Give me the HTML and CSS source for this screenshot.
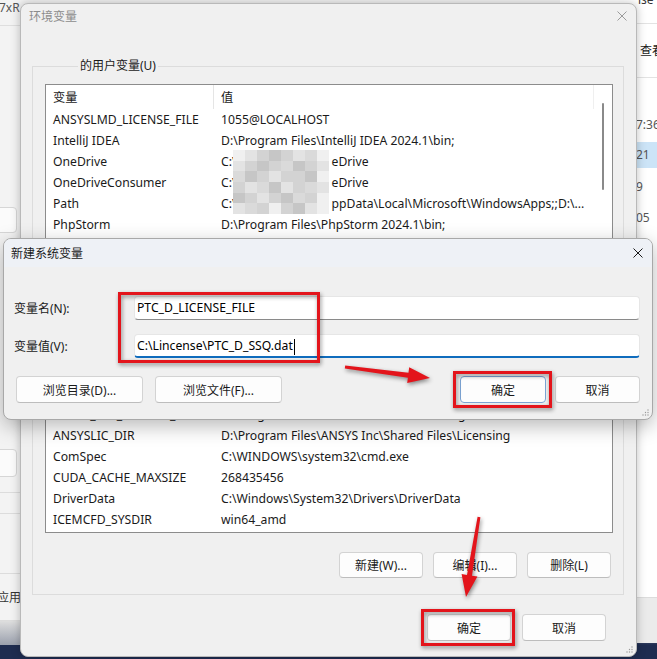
FILE: index.html
```html
<!DOCTYPE html>
<html lang="zh-CN">
<head>
<meta charset="utf-8">
<title>环境变量</title>
<link rel="stylesheet" href="styles.css">
</head>
<body>
<div class="desk">
  <div class="bgwin bg-left">
    <div class="bl-head"><span>7xR</span></div>
    <div class="bl-box bl-box1"></div>
    <div class="bl-box bl-box2"></div>
    <div class="bl-line bl-l1"></div>
    <div class="bl-line bl-l2"></div>
    <div class="bl-line bl-l3"></div>
    <div class="bl-apply">应用(A)</div>
    <div class="bl-line bl-l4"></div>
    <div class="bl-foot"></div>
  </div>

  <div class="bgwin bg-right">
    <div class="br-top"><span>ise</span></div>
    <div class="br-tool">查看</div>
    <div class="br-gap"></div>
    <div class="br-row">7:36</div>
    <div class="br-row sel">21</div>
    <div class="br-row">9</div>
    <div class="br-row">05</div>
    <div class="br-fill"></div>
    <div class="br-status"></div>
  </div>

  <section class="win env">
    <header class="tb">
      <span class="title">环境变量</span>
      <svg class="close" width="10" height="10" viewBox="0 0 10 10"><path d="M0.5 0.5L9.5 9.5M9.5 0.5L0.5 9.5"/></svg>
    </header>

    <fieldset class="group group-user">
      <legend>的用户变量(U)</legend>
      <div class="list">
        <div class="list-main">
          <div class="lh"><div class="c1">变量</div><div class="c2">值</div></div>
          <div class="lr"><div class="c1">ANSYSLMD_LICENSE_FILE</div><div class="c2">1055@LOCALHOST</div></div>
          <div class="lr"><div class="c1">IntelliJ IDEA</div><div class="c2">D:\Program Files\IntelliJ IDEA 2024.1\bin;</div></div>
          <div class="lr"><div class="c1">OneDrive</div><div class="c2">C:\<span class="redact"></span>eDrive</div></div>
          <div class="lr"><div class="c1">OneDriveConsumer</div><div class="c2">C:\<span class="redact"></span>eDrive</div></div>
          <div class="lr"><div class="c1">Path</div><div class="c2">C:\<span class="redact"></span>ppData\Local\Microsoft\WindowsApps;;D:\...</div></div>
          <div class="lr"><div class="c1">PhpStorm</div><div class="c2">D:\Program Files\PhpStorm 2024.1\bin;</div></div>
          <div class="lr"><div class="c1">TEMP</div><div class="c2">%USERPROFILE%\AppData\Local\Temp</div></div>
        </div>
        <div class="vscroll"><div class="thumb"></div></div>
        <div class="mosaic">
          <i class="d"></i><i class="b"></i><i class="a"></i><i class="c"></i><i class="a"></i><i class="b"></i><i class="e"></i><i class="d"></i>
          <i class="b"></i><i class="a"></i><i class="c"></i><i class="a"></i><i class="e"></i><i class="c"></i><i class="a"></i><i class="b"></i>
          <i class="e"></i><i class="c"></i><i class="a"></i><i class="b"></i><i class="a"></i><i class="a"></i><i class="c"></i><i class="d"></i>
          <i class="a"></i><i class="b"></i><i class="e"></i><i class="c"></i><i class="b"></i><i class="a"></i><i class="e"></i><i class="b"></i>
          <i class="c"></i><i class="a"></i><i class="b"></i><i class="a"></i><i class="c"></i><i class="e"></i><i class="a"></i><i class="d"></i>
          <i class="b"></i><i class="e"></i><i class="a"></i><i class="d"></i><i class="a"></i><i class="c"></i><i class="b"></i><i class="d"></i>
        </div>
      </div>
      <div class="btnrow">
        <div class="btn">新建(N)...</div>
        <div class="btn">编辑(E)...</div>
        <div class="btn">删除(D)</div>
      </div>
    </fieldset>

    <fieldset class="group group-sys">
      <legend>系统变量(S)</legend>
      <div class="list list-sys">
        <div class="list-main">
          <div class="lh"><div class="c1">变量</div><div class="c2">值</div></div>
          <div class="lr"><div class="c1">ANSYS_SYSDIR</div><div class="c2">winx64</div></div>
          <div class="lr"><div class="c1">ANSYS241_DIR</div><div class="c2">D:\Program Files\ANSYS Inc\v241\ANSYS</div></div>
          <div class="lr"><div class="c1">ANSYS_INC_LICENSE_DIR</div><div class="c2">D:\Program Files\ANSYS Inc\v241\licensing</div></div>
          <div class="lr"><div class="c1">ANSYSLIC_DIR</div><div class="c2">D:\Program Files\ANSYS Inc\Shared Files\Licensing</div></div>
          <div class="lr"><div class="c1">ComSpec</div><div class="c2">C:\WINDOWS\system32\cmd.exe</div></div>
          <div class="lr"><div class="c1">CUDA_CACHE_MAXSIZE</div><div class="c2">268435456</div></div>
          <div class="lr"><div class="c1">DriverData</div><div class="c2">C:\Windows\System32\Drivers\DriverData</div></div>
          <div class="lr"><div class="c1">ICEMCFD_SYSDIR</div><div class="c2">win64_amd</div></div>
        </div>
        <div class="vscroll"></div>
      </div>
      <div class="btnrow">
        <div class="btn">新建(W)...</div>
        <div class="btn">编辑(I)...</div>
        <div class="btn">删除(L)</div>
      </div>
    </fieldset>

    <div class="actions">
      <div class="btn">确定</div>
      <div class="btn">取消</div>
    </div>
    <svg class="grip" width="7" height="7" viewBox="0 0 7 7"><circle cx="6" cy="1" r="0.7"/><circle cx="3.5" cy="3.5" r="0.7"/><circle cx="6" cy="3.5" r="0.7"/><circle cx="1" cy="6" r="0.7"/><circle cx="3.5" cy="6" r="0.7"/><circle cx="6" cy="6" r="0.7"/></svg>
  </section>

  <section class="win newvar">
    <header class="tb">
      <span class="title">新建系统变量</span>
      <svg class="close" width="10" height="10" viewBox="0 0 10 10"><path d="M0.5 0.5L9.5 9.5M9.5 0.5L0.5 9.5"/></svg>
    </header>
    <div class="nv-body">
      <div class="field">
        <label>变量名(N):</label>
        <div class="input">PTC_D_LICENSE_FILE</div>
      </div>
      <div class="field">
        <label>变量值(V):</label>
        <div class="input focus">C:\Lincense\PTC_D_SSQ.dat<span class="caret"></span></div>
      </div>
      <div class="nv-btns">
        <div class="btn wide">浏览目录(D)...</div>
        <div class="btn wide">浏览文件(F)...</div>
        <div class="nv-right">
          <div class="btn ok default">确定</div>
          <div class="btn cancel">取消</div>
        </div>
      </div>
    </div>
    <svg class="grip" width="7" height="7" viewBox="0 0 7 7"><circle cx="6" cy="1" r="0.7"/><circle cx="3.5" cy="3.5" r="0.7"/><circle cx="6" cy="3.5" r="0.7"/><circle cx="1" cy="6" r="0.7"/><circle cx="3.5" cy="6" r="0.7"/><circle cx="6" cy="6" r="0.7"/></svg>
  </section>

  <svg class="annot" width="657" height="659" viewBox="0 0 657 659">
    <g class="marks">
      <rect x="119.5" y="293.5" width="199" height="68"/>
      <rect x="454.5" y="372.5" width="96" height="34"/>
      <rect x="422.5" y="610.5" width="91" height="34"/>
    </g>
    <g class="arrows">
      <polygon points="345.2,365.6 408.5,372.7 409.2,367.3 430,378 407.2,383.1 407.9,377.7 344.8,368.4"/>
      <polygon points="480.4,517.2 472,575.7 477.4,576.6 466,597 461.6,574 467,574.9 477.6,516.8"/>
    </g>
  </svg>
</div>
</body>
</html>
```

FILE: styles.css
```css
* { box-sizing: border-box; }
html, body { margin: 0; padding: 0; }
body {
  width: 657px;
  height: 659px;
  overflow: hidden;
  font-family: "Noto Sans", "Noto Sans CJK SC", sans-serif;
  font-size: 12px;
  color: #1a1a1a;
  background: #1e2c50;
}
.desk {
  position: relative;
  width: 657px;
  height: 659px;
  overflow: hidden;
  background: linear-gradient(#f2f2f2 0, #f2f2f2 620px, #1e2c50 645px);
}

/* background windows */
.bgwin { position: absolute; top: 0; display: flex; flex-direction: column; }
.bg-left { left: 0; width: 60px; height: 645px; background: #f3f3f3; }
.bl-head { height: 26px; border-bottom: 1px solid #dedede; line-height: 16px; color: #555; white-space: nowrap; }
.bl-head span { margin-left: -1px; }
.bl-box { margin-left: -10px; width: 27px; flex: none; background: #fbfbfb; border: 1px solid #d6d6d6; border-radius: 4px; }
.bl-box1 { margin-top: 181px; height: 26px; }
.bl-box2 { margin-top: 216px; height: 28px; }
.bl-line { height: 0; border-top: 1px solid #dcdcdc; }
.bl-l1 { margin-top: 15px; }
.bl-l2 { margin-top: 20px; }
.bl-l3 { margin-top: 59px; }
.bl-apply { margin-top: 14px; height: 20px; line-height: 20px; margin-left: -3px; color: #333; white-space: nowrap; }
.bl-l4 { margin-top: 12px; }
.bl-foot { flex: 1; background: linear-gradient(#dedede, #9aa0ad); }

.bg-right { left: 560px; width: 97px; height: 643px; background: #fff; white-space: nowrap; }
.br-top { height: 24px; border-bottom: 1px solid #e3e3e3; }
.br-top span { display: block; margin-top: -9px; padding-left: 78px; color: #333; }
.br-tool { height: 54px; line-height: 53px; border-bottom: 1px solid #e3e3e3; padding-left: 80px; color: #1a1a1a; }
.br-gap { height: 31px; }
.br-row { height: 31px; line-height: 31px; padding-left: 76px; color: #555; }
.br-row.sel { height: 26px; line-height: 26px; margin: 2px 0 3px; background: #cce4f7; }
.br-fill { flex: 1; }
.br-status { height: 46px; background: #ebebeb; border-top: 1px solid #dcdcdc; }

/* windows */
.win { position: absolute; }
.tb { display: flex; align-items: center; justify-content: space-between; }
.close { margin-right: 9px; fill: none; stroke: #1a1a1a; stroke-width: 1; }
.grip { position: absolute; right: 3px; bottom: 3px; fill: #9a9a9a; }

.env {
  left: 20px;
  top: 3px;
  width: 617px;
  height: 654px;
  background: #f0f0f0;
  border: 1px solid #b9b9b9;
  border-radius: 8px;
  box-shadow: 0 0 10px rgba(0, 0, 0, 0.25);
}
.env .tb { height: 23px; padding-left: 8px; color: #8c8c8c; }
.env .close { stroke: #9a9a9a; }

.group {
  margin: 30px 12px 0 11px;
  padding: 0 10px 10px 12px;
  border: 1px solid #dcdcdc;
  min-width: 0;
}
.group legend { padding: 0 2px; margin-left: 33px; line-height: 18px; }
.group-sys { margin-top: 8px; padding-bottom: 16px; }
.group-sys legend { margin-left: 0; }

.list {
  position: relative;
  margin-top: 9px;
  border: 1px solid #8c8c8c;
  background: #fff;
  display: flex;
  font-size: 12.2px;
}
.list-sys { padding-bottom: 2px; }
.list-main { flex: 1; min-width: 0; }
.lh, .lr { display: grid; grid-template-columns: 168px 1fr; }
.lh { height: 24px; line-height: 25px; border-right: 1px solid #efefef; }
.lh .c1 { border-right: 1px solid #e5e5e5; }
.lr { height: 21px; line-height: 22px; }
.c1, .c2 { padding-left: 7px; white-space: nowrap; overflow: hidden; }
.redact { display: inline-block; width: 95px; }
.vscroll { width: 18px; flex: none; }
.thumb { margin: 18px 0 0 8px; width: 2px; height: 87px; border-radius: 1px; background: #8a8a8a; }

.mosaic {
  position: absolute;
  left: 187px;
  top: 65px;
  width: 96px;
  height: 64px;
  display: grid;
  grid-template-columns: repeat(8, 1fr);
  grid-template-rows: repeat(6, 1fr);
}
.mosaic i.a { background: #d3d3d3; }
.mosaic i.b { background: #e3e3e3; }
.mosaic i.c { background: #c6c6c6; }
.mosaic i.d { background: #f0f0f0; }
.mosaic i.e { background: #dadada; }

.btn {
  height: 26px;
  width: 84px;
  flex: none;
  display: flex;
  align-items: center;
  justify-content: center;
  background: #fdfdfd;
  border: 1px solid #d3d3d3;
  border-bottom-color: #bdbdbd;
  border-radius: 4px;
  color: #1a1a1a;
  white-space: nowrap;
}
.btnrow { display: flex; justify-content: flex-end; gap: 10px; margin-top: 8px; padding-right: 2px; }
.group-sys .btnrow { margin-top: 19px; }
.actions { display: flex; justify-content: flex-end; gap: 11px; margin-top: 19px; padding-right: 30px; }
.actions .btn { height: 27px; }

/* new variable dialog */
.newvar {
  left: 3px;
  top: 238px;
  width: 650px;
  height: 182px;
  border: 1px solid #a8a8a8;
  border-radius: 8px;
  background: #f0f0f0;
  box-shadow: 0 6px 20px rgba(0, 0, 0, 0.28);
  overflow: hidden;
}
.newvar .tb { height: 28px; padding-left: 7px; background: #eef1f6; }
.nv-body { padding: 29px 12px 16px 10px; display: flex; flex-direction: column; }
.field { display: flex; align-items: center; }
.field + .field { margin-top: 14px; }
.field label { width: 120px; flex: none; }
.input {
  flex: 1;
  height: 24px;
  background: #fff;
  border: 1px solid #e6e6e6;
  border-bottom-color: #8a8a8a;
  border-radius: 4px;
  padding-left: 2px;
  line-height: 22px;
  white-space: nowrap;
  color: #000;
  font-size: 12.2px;
}
.input.focus { border-bottom: 2px solid #0f6cbd; line-height: 21px; }
.caret { display: inline-block; width: 1px; height: 16px; background: #000; vertical-align: middle; margin-left: 1px; }
.nv-btns { display: flex; margin-top: 18px; margin-left: 2px; gap: 12px; }
.nv-btns .btn { height: 27px; }
.btn.wide { width: 127px; }
.nv-right { display: flex; gap: 9px; margin-left: auto; }
.btn.ok { width: 86px; }
.btn.cancel { width: 85px; }
.btn.default { border-color: #7ca4d4; }

/* annotations */
.annot { position: absolute; left: 0; top: 0; pointer-events: none; }
.marks rect { fill: none; stroke: #e3141b; stroke-width: 3; filter: drop-shadow(1px 2px 2px rgba(0, 0, 0, 0.45)); }
.arrows polygon { fill: #e3141b; filter: drop-shadow(1px 2px 2px rgba(0, 0, 0, 0.45)); }
```
